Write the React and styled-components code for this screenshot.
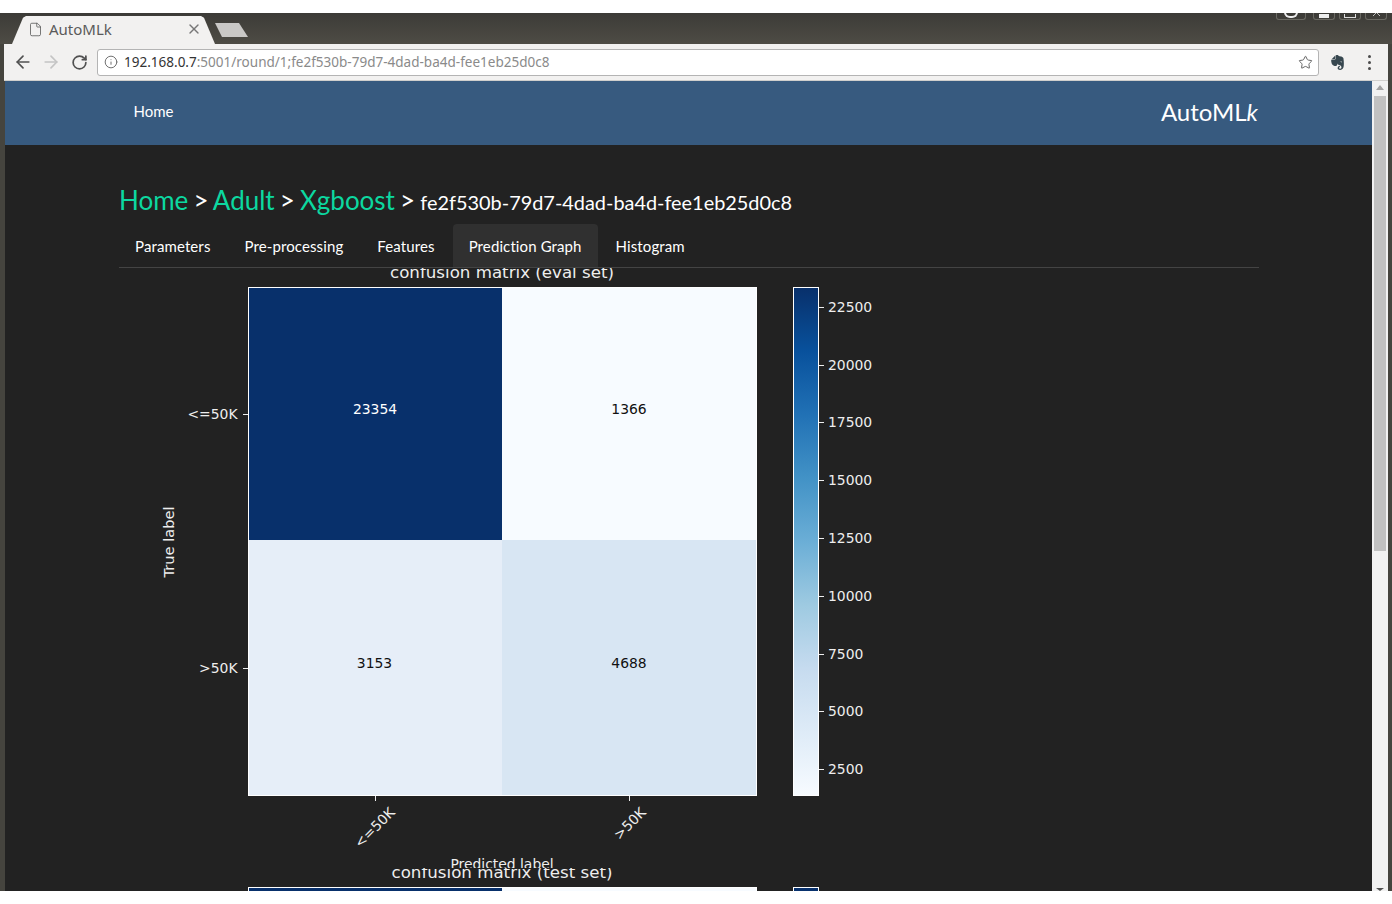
import React from "react";
import styled, { createGlobalStyle } from "styled-components";
import { ArrowLeft, ArrowRight, RotateCw, Info, Star, File, X } from "lucide-react";
import { SiEvernote } from "react-icons/si";

const GlobalStyle = createGlobalStyle`
  html, body {
    margin: 0;
    height: 904px;
    overflow: hidden;
    background: #fff;
  }
`;

const Browser = styled.div`
  margin-top: 13px;
  height: 878px;
  display: flex;
  flex-direction: column;
  background: #45443e;
  padding: 0 4px 0 5px;
  overflow: hidden;
`;

const TabStrip = styled.div`
  height: 31px;
  margin: 0 -4px 0 -5px;
  padding-left: 12px;
  flex: none;
  display: flex;
  align-items: flex-start;
  background: linear-gradient(#3c3b37, #4e4c45);
`;

const Tab = styled.div`
  width: 203px;
  height: 28px;
  margin-top: 3px;
  box-sizing: border-box;
  padding: 0 13px 2px 16px;
  display: flex;
  align-items: center;
  background: #f2f1f0;
  clip-path: polygon(0 100%, 11px 6%, 14px 0, 189px 0, 192px 6%, 203px 100%);
  color: #5a5a5a;
  font: 15px "Noto Sans", sans-serif;
`;

const TabTitle = styled.span`
  margin-left: 6px;
  flex: 1;
`;

const NewTab = styled.div`
  width: 33px;
  height: 14px;
  margin-top: 10px;
  background: #c9c8c6;
  clip-path: polygon(0 0, 24px 0, 33px 100%, 7px 100%);
`;

const WindowControls = styled.div`
  margin-left: auto;
  margin-right: 5px;
  display: flex;
  gap: 4px;
`;

const WindowButton = styled.div`
  width: ${(p) => p.$width}px;
  height: 7px;
  margin-right: ${(p) => p.$after || 0}px;
  box-sizing: border-box;
  border: 1px solid #6b6a63;
  border-top: 0;
  border-radius: 0 0 3px 3px;
  display: flex;
  justify-content: center;
  align-items: flex-end;
  overflow: hidden;
  color: #ddd;
`;

const Mark = styled.div`
  width: ${(p) => p.$width}px;
  height: ${(p) => (p.$round ? 6 : 4)}px;
  background: ${(p) => (p.$solid ? "#eee" : "transparent")};
  border: ${(p) => (p.$solid ? "0" : p.$round ? "2px solid #eee" : "1px solid #ddd")};
  border-top: 0;
  border-radius: ${(p) => (p.$round ? "0 0 7px 7px" : "0")};
  margin-bottom: 1px;
  box-sizing: border-box;
`;

const Toolbar = styled.div`
  height: 37px;
  flex: none;
  margin-left: -1px;
  display: flex;
  align-items: center;
  background: #f2f1f0;
  border-bottom: 1px solid #d0cfcd;
  box-sizing: border-box;
  padding: 0 0 0 5px;
`;

const NavIcon = styled.span`
  width: 28px;
  display: flex;
  justify-content: center;
  color: ${(p) => (p.$off ? "#c4c4c4" : "#505050")};
`;

const Omnibox = styled.div`
  width: 1222px;
  height: 27px;
  margin-left: 4px;
  box-sizing: border-box;
  display: flex;
  align-items: center;
  padding: 0 5px 0 6px;
  gap: 6px;
  background: #fff;
  border: 1px solid #b4b4b4;
  border-radius: 3px;
  font: 13.53px "Noto Sans", sans-serif;
  color: #8a8a8a;
`;

const Address = styled.span`
  flex: 1;
  white-space: nowrap;
`;

const Host = styled.span`
  color: #333;
`;

const Extension = styled.span`
  width: 36px;
  display: flex;
  justify-content: center;
  color: #37474f;
`;

const Dots = styled.div`
  display: flex;
  flex-direction: column;
  gap: 3px;
  margin-left: 13px;
`;

const Dot = styled.i`
  width: 3px;
  height: 3px;
  border-radius: 50%;
  background: #4a4a4a;
`;

const PageRow = styled.div`
  flex: 1;
  min-height: 0;
  display: flex;
`;

const Page = styled.div`
  flex: 1;
  min-width: 0;
  overflow: hidden;
  background: #222;
  color: #fff;
  font-family: Lato, sans-serif;
`;

const Navbar = styled.div`
  height: 64px;
  box-sizing: border-box;
  padding: 0 114px 0 129px;
  display: flex;
  align-items: center;
  justify-content: space-between;
  background: #375a7f;
`;

const NavLink = styled.a`
  font-size: 15px;
  color: #fff;
  margin: -4px 0 0 -0.5px;
`;

const Brand = styled.span`
  font-size: 24px;
  color: #fff;
  margin-top: -4px;
`;

const Container = styled.div`
  width: 1140px;
  margin-left: 114px;
`;

const Heading = styled.h3`
  margin: 40px 0 8px;
  height: 31px;
  line-height: 31px;
  font-size: 26px;
  font-weight: 400;
  word-spacing: -1.5px;
  white-space: nowrap;
`;

const Crumb = styled.a`
  color: #0cd8a0;
`;

const RunId = styled.small`
  font-size: 19.9px;
`;

const Tabs = styled.div`
  display: flex;
  gap: 2px;
  height: 44px;
  box-sizing: border-box;
  border-bottom: 1px solid #444;
`;

const TabLink = styled.a`
  height: 43px;
  box-sizing: border-box;
  padding: 0 16px;
  display: flex;
  align-items: center;
  font-size: 15px;
  letter-spacing: 0.11px;
  color: #fff;
  border-radius: 4px 4px 0 0;
  background: ${(p) => (p.$active ? "#303030" : "transparent")};
`;

const Figure = styled.svg`
  display: block;
  width: 1000px;
  height: 600px;
`;

const FigText = styled.text`
  fill: ${(p) => p.$fill || "#eee"};
  font-family: "DejaVu Sans", sans-serif;
  font-size: ${(p) => p.$size || 13.9}px;
  text-anchor: ${(p) => p.$anchor || "middle"};
`;

const Scrollbar = styled.div`
  width: 16px;
  flex: none;
  display: flex;
  flex-direction: column;
  align-items: center;
  background: #f1f1f1;
`;

const ArrowUp = styled.div`
  width: 0;
  height: 0;
  margin-top: 4px;
  border: 4px solid transparent;
  border-top: 0;
  border-bottom: 5px solid #a3a3a3;
`;

const Thumb = styled.div`
  width: 12px;
  height: 455px;
  margin-top: 6px;
  background: #c1c1c1;
`;

const ArrowDown = styled.div`
  width: 0;
  height: 0;
  margin-top: auto;
  border: 4px solid transparent;
  border-bottom: 0;
  border-top: 3px solid #505050;
`;

const CB_TICKS = [
  [22500, 39],
  [20000, 97],
  [17500, 154],
  [15000, 212],
  [12500, 270],
  [10000, 328],
  [7500, 386],
  [5000, 443],
  [2500, 501],
];

const BLUES = ["#08306b", "#08519c", "#2171b5", "#4292c6", "#6baed6", "#9ecae1", "#c6dbef", "#deebf7", "#f7fbff"];

const Confusion = ({ id, title, values }) => (
  <Figure viewBox="0 0 1000 600">
    <defs>
      <linearGradient id={id} x1="0" y1="0" x2="0" y2="1">
        {BLUES.map((c, i) => (
          <stop key={c} offset={i / 8} stopColor={c} />
        ))}
      </linearGradient>
    </defs>

    <FigText x="383" y="10" $size={16.67}>{title}</FigText>

    <g shapeRendering="crispEdges">
      <rect x="129" y="19" width="254" height="253" fill="#08306b" />
      <rect x="383" y="19" width="255" height="253" fill="#f7fbff" />
      <rect x="129" y="272" width="254" height="256" fill="#e6eef8" />
      <rect x="383" y="272" width="255" height="256" fill="#d8e6f3" />
      <rect x="129.5" y="19.5" width="508" height="508" fill="none" stroke="#fff" strokeWidth="1" />
    </g>

    {values && (
      <>
        <FigText x="256" y="146" $fill="#fff">{values[0]}</FigText>
        <FigText x="510" y="146" $fill="#111">{values[1]}</FigText>
        <FigText x="255.5" y="400" $fill="#111">{values[2]}</FigText>
        <FigText x="510" y="400" $fill="#111">{values[3]}</FigText>
      </>
    )}

    <path d="M124 146.5h5M124 400.5h5M256.5 528v5M510.5 528v5" stroke="#eee" fill="none" />
    <FigText x="118.5" y="151" $anchor="end">&lt;=50K</FigText>
    <FigText x="118.5" y="405" $anchor="end">&gt;50K</FigText>
    <FigText transform="translate(259 563) rotate(-45)">&lt;=50K</FigText>
    <FigText transform="translate(514 559) rotate(-45)">&gt;50K</FigText>
    <FigText x="383" y="601">Predicted label</FigText>
    <FigText transform="translate(55 274) rotate(-90)" $size={14.6}>True label</FigText>

    <rect x="674.5" y="19.5" width="25" height="508" fill={`url(#${id})`} stroke="#fff" strokeWidth="1" />
    {CB_TICKS.map(([label, y]) => (
      <g key={label}>
        <path d={`M700 ${y + 0.5}h5`} stroke="#eee" />
        <FigText x="709" y={y + 5} $anchor="start">{label}</FigText>
      </g>
    ))}
  </Figure>
);

const App = () => (
  <>
    <GlobalStyle />
    <Browser>
      <TabStrip>
        <Tab>
          <File size={15} strokeWidth={1.3} />
          <TabTitle>AutoMLk</TabTitle>
          <X size={16} color="#777" strokeWidth={2} />
        </Tab>
        <NewTab />
        <WindowControls>
          <WindowButton $width={30} $after={3}><Mark $width={14} $round /></WindowButton>
          <WindowButton $width={22}><Mark $width={10} $solid /></WindowButton>
          <WindowButton $width={22}><Mark $width={12} /></WindowButton>
          <WindowButton $width={22}><X size={13} strokeWidth={1.5} /></WindowButton>
        </WindowControls>
      </TabStrip>

      <Toolbar>
        <NavIcon><ArrowLeft size={20} strokeWidth={2} /></NavIcon>
        <NavIcon $off><ArrowRight size={20} strokeWidth={2} /></NavIcon>
        <NavIcon><RotateCw size={17} strokeWidth={2.4} /></NavIcon>
        <Omnibox>
          <Info size={14} color="#666" strokeWidth={1.6} />
          <Address><Host>192.168.0.7</Host>:5001/round/1;fe2f530b-79d7-4dad-ba4d-fee1eb25d0c8</Address>
          <Star size={15} color="#666" strokeWidth={1.6} />
        </Omnibox>
        <Extension><SiEvernote size={15} /></Extension>
        <Dots><Dot /><Dot /><Dot /></Dots>
      </Toolbar>

      <PageRow>
        <Page>
          <Navbar>
            <NavLink>Home</NavLink>
            <Brand>AutoML<em>k</em></Brand>
          </Navbar>
          <Container>
            <Heading>
              <Crumb>Home</Crumb> &gt; <Crumb>Adult</Crumb> &gt; <Crumb>Xgboost</Crumb> &gt;{" "}
              <RunId>fe2f530b-79d7-4dad-ba4d-fee1eb25d0c8</RunId>
            </Heading>
            <Tabs>
              <TabLink>Parameters</TabLink>
              <TabLink>Pre-processing</TabLink>
              <TabLink>Features</TabLink>
              <TabLink $active>Prediction Graph</TabLink>
              <TabLink>Histogram</TabLink>
            </Tabs>
            <Confusion id="cb-eval" title="confusion matrix (eval set)" values={["23354", "1366", "3153", "4688"]} />
            <Confusion id="cb-test" title="confusion matrix (test set)" />
          </Container>
        </Page>
        <Scrollbar>
          <ArrowUp />
          <Thumb />
          <ArrowDown />
        </Scrollbar>
      </PageRow>
    </Browser>
  </>
);

export default App;
